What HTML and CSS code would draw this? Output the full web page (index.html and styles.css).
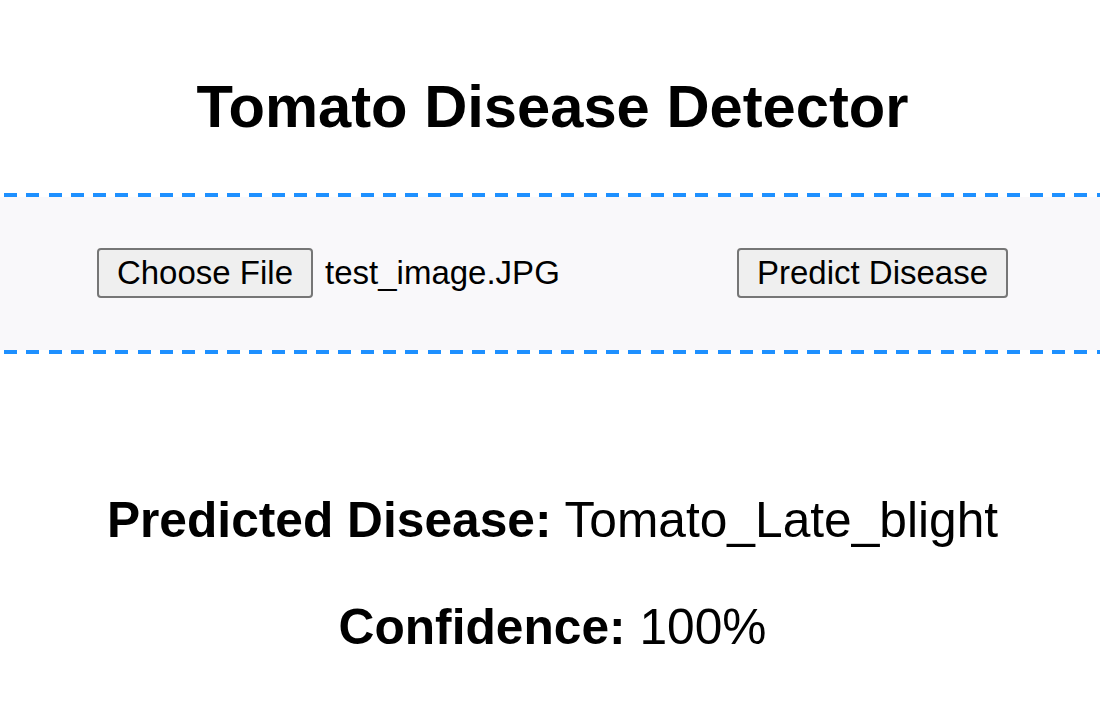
FILE: index.html
```html
<!DOCTYPE html>
<html lang="en">
<head>
<meta charset="utf-8">
<title>Tomato Disease Detector</title>
<link rel="stylesheet" href="styles.css">
</head>
<body>
  <h1 class="title">Tomato Disease Detector</h1>
  <form class="upload">
    <div class="upload-row">
      <div class="file-input">
        <button type="button" class="btn">Choose File</button>
        <span class="file-name">test_image.JPG</span>
      </div>
      <button type="button" class="btn">Predict Disease</button>
    </div>
  </form>
  <div class="results">
    <p class="result-line"><strong>Predicted Disease:</strong> Tomato_Late_blight</p>
    <p class="result-line"><strong>Confidence:</strong> 100%</p>
  </div>
</body>
</html>
```

FILE: styles.css
```css
html, body {
  margin: 0;
  padding: 0;
  background: #ffffff;
  color: #000;
  font-family: "Liberation Sans", Arial, sans-serif;
}

.title {
  margin: 0;
  padding: 72px 0 0 5px;
  font-size: 59.7px;
  line-height: 69px;
  font-weight: 700;
  text-align: center;
}

.upload {
  margin: 52px 0 0 0;
  padding: 4px 0;
  background:
    repeating-linear-gradient(90deg, #1e90ff 0 13px, transparent 13px 22.3px) 4px 0 / 100% 4px no-repeat,
    repeating-linear-gradient(90deg, #1e90ff 0 13px, transparent 13px 22.3px) 4px 100% / 100% 4px no-repeat,
    linear-gradient(#f9f8fa, #f9f8fa) 0 4px / 100% calc(100% - 8px) no-repeat,
    #ffffff;
}

.upload-row {
  display: flex;
  justify-content: center;
  align-items: center;
  gap: 11px;
  padding: 51px 0 52px 5px;
}

.file-input {
  width: 629px;
  display: flex;
  align-items: center;
  gap: 12px;
}

.btn {
  font-family: "Liberation Sans", Arial, sans-serif;
  font-size: 33px;
  line-height: 38px;
  padding: 4px 18px;
  border: 2px solid #767676;
  border-radius: 4px;
  background: #efefef;
  color: #000;
}

.file-name {
  font-size: 33px;
  line-height: 38px;
}

.results {
  padding: 138px 0 0 5px;
  text-align: center;
}

.result-line {
  margin: 0 0 51px 0;
  font-size: 49.7px;
  line-height: 56px;
}
```
